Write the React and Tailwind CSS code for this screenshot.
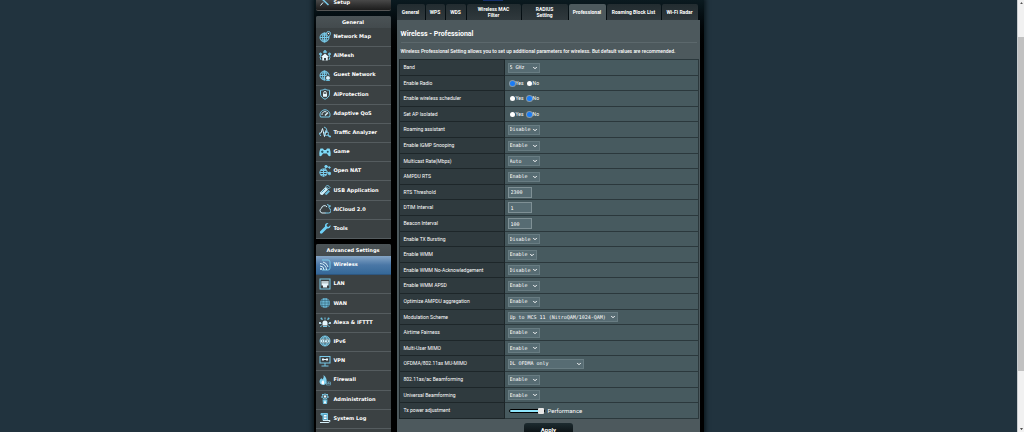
import { useState } from "react";
import { ChevronDown } from "lucide-react";

const generalMenu = [
  { label: "Network Map", icon: "map" },
  { label: "AiMesh", icon: "mesh" },
  { label: "Guest Network", icon: "guest" },
  { label: "AiProtection", icon: "shield" },
  { label: "Adaptive QoS", icon: "gauge" },
  { label: "Traffic Analyzer", icon: "traffic" },
  { label: "Game", icon: "game" },
  { label: "Open NAT", icon: "nat" },
  { label: "USB Application", icon: "usb" },
  { label: "AiCloud 2.0", icon: "cloud" },
  { label: "Tools", icon: "wrench" },
];

const advancedMenu = [
  { label: "Wireless", icon: "wireless" },
  { label: "LAN", icon: "lan" },
  { label: "WAN", icon: "wan" },
  { label: "Alexa & IFTTT", icon: "alexa" },
  { label: "IPv6", icon: "ipv6" },
  { label: "VPN", icon: "vpn" },
  { label: "Firewall", icon: "firewall" },
  { label: "Administration", icon: "admin" },
  { label: "System Log", icon: "log" },
];

const tabs = [
  { label: "General", width: "w-7" },
  { label: "WPS", width: "w-[19px]" },
  { label: "WDS", width: "w-5" },
  { label: "Wireless MAC Filter", width: "w-[54px] px-2" },
  { label: "RADIUS Setting", width: "w-[46px] px-3" },
  { label: "Professional", width: "w-[37px]" },
  { label: "Roaming Block List", width: "w-[54px]" },
  { label: "Wi-Fi Radar", width: "w-9" },
];

const toggle = ["Enable", "Disable"];

const settings = [
  { label: "Band", type: "select", options: ["5 GHz", "2.4 GHz"] },
  { label: "Enable Radio", type: "radio", value: "Yes" },
  { label: "Enable wireless scheduler", type: "radio", value: "No" },
  { label: "Set AP Isolated", type: "radio", value: "No" },
  { label: "Roaming assistant", type: "select", options: ["Disable", "Enable"] },
  { label: "Enable IGMP Snooping", type: "select", options: toggle },
  { label: "Multicast Rate(Mbps)", type: "select", options: ["Auto"] },
  { label: "AMPDU RTS", type: "select", options: toggle },
  { label: "RTS Threshold", type: "text", value: "2300" },
  { label: "DTIM Interval", type: "text", value: "1" },
  { label: "Beacon Interval", type: "text", value: "100" },
  { label: "Enable TX Bursting", type: "select", options: ["Disable", "Enable"] },
  { label: "Enable WMM", type: "select", options: toggle, width: "w-[29px]" },
  { label: "Enable WMM No-Acknowledgement", type: "select", options: ["Disable", "Enable"] },
  { label: "Enable WMM APSD", type: "select", options: toggle },
  { label: "Optimize AMPDU aggregation", type: "select", options: toggle },
  { label: "Modulation Scheme", type: "select", options: ["Up to MCS 11 (NitroQAM/1024-QAM)"], width: "w-[110px]" },
  { label: "Airtime Fairness", type: "select", options: toggle },
  { label: "Multi-User MIMO", type: "select", options: toggle },
  { label: "OFDMA/802.11ax MU-MIMO", type: "select", options: ["DL OFDMA only"], width: "w-[76px]" },
  { label: "802.11ax/ac Beamforming", type: "select", options: toggle },
  { label: "Universal Beamforming", type: "select", options: toggle },
  { label: "Tx power adjustment", type: "range" },
];

const globe = (
  <>
    <circle cx="11" cy="13" r="9" />
    <ellipse cx="11" cy="13" rx="4" ry="9" />
    <path d="M2 13h18M4 8h14M4 18h14M11 4v18" />
  </>
);

const icons = {
  setup: (
    <>
      <path d="M3 5l16 15M3 5l4-1M3 5l-1 4" strokeWidth="3" />
      <path d="M20 4l-6 6M8 15l-5 6" stroke="#dff4fd" />
    </>
  ),
  map: (
    <>
      {globe}
      <path d="M19 12c-2-3-4-4-4-7a4 4 0 0 1 8 0c0 3-2 4-4 7z" fill="#3b4143" />
      <circle cx="19" cy="5" r="1.500" fill="#fff" stroke="none" />
    </>
  ),
  mesh: (
    <>
      <path d="M12 7l-8 7h2.500v7h11v-7H20z" fill="#e6f6fd" stroke="none" />
      <path d="M4 20a10 10 0 0 1 0-11M20 20a10 10 0 0 0 0-11M8 4.500a10 10 0 0 1 8 0" />
      <circle cx="3" cy="8" r="2" fill="#69bedd" />
      <circle cx="21" cy="8" r="2" fill="#69bedd" />
      <circle cx="12" cy="3" r="2" fill="#69bedd" />
      <path d="M10 21v-5h4v5" fill="#3b4143" stroke="none" />
    </>
  ),
  guest: (
    <>
      {globe}
      <circle cx="18" cy="18" r="5" fill="#d8f1fb" stroke="#3b4143" />
      <path d="M14 24c0-4 8-4 8 0z" fill="#69bedd" stroke="none" />
    </>
  ),
  shield: (
    <>
      <path d="M12 2c3 2 6 2.500 9 2.500V12c0 5-4 8-9 10.500C7 20 3 17 3 12V4.500C6 4.500 9 4 12 2z" />
      <path d="M9.500 12V9.500a2.500 2.500 0 0 1 5 0V12" stroke="#e6f6fd" />
      <rect x="8" y="12" width="8" height="5.500" fill="#e6f6fd" stroke="none" />
    </>
  ),
  gauge: (
    <>
      <path d="M3 20a10 10 0 1 1 18 0z" />
      <path d="M6 16a6 6 0 0 1 9-6" stroke="#d8f1fb" />
      <path d="M12 17l6-6" stroke="#d8f1fb" strokeWidth="3" />
    </>
  ),
  traffic: (
    <>
      <path d="M1 14h3l3-9 4 16 3-12 2 5" stroke="#d8f1fb" />
      <path d="M10 2a8 8 0 0 1 6 8M4 20a8 8 0 0 1-3-6" />
      <circle cx="15" cy="15" r="4" />
      <path d="M18 18l3 3h3" strokeWidth="3" />
    </>
  ),
  game: (
    <>
      <path d="M3 5h5l2 3h4l2-3h5c2 4 3 9 2 15-3 1-5-1-7-5H8c-2 4-4 6-7 5C0 14 1 9 3 5z" fill="#7fdaf8" stroke="none" />
      <path d="M6.500 9v5M4 11.500h5" stroke="#24505f" />
      <circle cx="17.500" cy="11.500" r="2" fill="#24505f" stroke="none" />
    </>
  ),
  nat: (
    <>
      <circle cx="9" cy="15" r="7.500" />
      <path d="M2 15h15M9 8v15M4 11h10M4 19h10" />
      <path d="M11 9l4-6 6 2M17 14l5 3" />
      <circle cx="14" cy="3" r="2.500" fill="#7fdaf8" />
      <circle cx="21" cy="5" r="1.500" fill="#7fdaf8" />
      <circle cx="21" cy="17" r="2.500" fill="#7fdaf8" />
    </>
  ),
  usb: (
    <>
      <path d="M2 17L13 6l5 5L7 22c-3 1-6-2-5-5z" fill="#cdeefa" stroke="none" />
      <path d="M14 5l3-3 5 5-3 3z" />
      <path d="M11 20l8-8 3 3-7 7z" fill="#69bedd" stroke="none" />
      <path d="M5 17l7-7" stroke="#4897b5" />
    </>
  ),
  cloud: (
    <>
      <path d="M13 20H6a5 5 0 0 1-1-9.500A6 6 0 0 1 16 8" stroke="#d8f1fb" />
      <path d="M12 20h7a4.500 4.500 0 0 0 1-9" />
      <path d="M16 3a7 7 0 0 1 6 5M22 4v4h-4" />
    </>
  ),
  wrench: (
    <path d="M2 19L12 9c-1-4 2-8 7-7l-4 4 1 3 3 1 4-4c1 5-3 8-7 7L6 23c-3 1-5-1-4-4z" fill="#6fd0f6" stroke="none" />
  ),
  wireless: (
    <>
      <path d="M6 2h12a4 4 0 0 1 4 4v12a4 4 0 0 1-4 4H6" />
      <path d="M2 9a13 13 0 0 1 13 13M2 14a8 8 0 0 1 8 8M8 6a13 13 0 0 1 10 10" stroke="#d8f1fb" />
      <circle cx="4" cy="20" r="2" fill="#d8f1fb" stroke="none" />
    </>
  ),
  lan: (
    <>
      <rect x="2" y="2" width="20" height="20" />
      <path d="M5 6h14v9h-3v4H8v-4H5z" fill="#e6f6fd" stroke="none" />
      <path d="M8 6v5M12 6v5M16 6v5" stroke="#3b4143" strokeWidth="1" />
    </>
  ),
  wan: (
    <>
      <circle cx="12" cy="12" r="10" fill="#6bb6d4" stroke="none" />
      <path d="M12 2v20M2 12h20M4 7h16M4 17h16M7 4c-2 5-2 11 0 16M17 4c2 5 2 11 0 16" stroke="#2d5567" strokeWidth="1" />
    </>
  ),
  alexa: (
    <>
      <path d="M7 19v-5a5 5 0 0 1 10 0v5z" fill="#e6f6fd" stroke="none" />
      <path d="M5 15L1 14M19 15l4-1M7 8L4 4M17 8l3-4M12 7V3M5 19l-2 3M19 19l2 3" />
      <circle cx="2" cy="14" r="2" fill="#d8f1fb" stroke="none" />
      <circle cx="22" cy="14" r="2" fill="#d8f1fb" stroke="none" />
      <circle cx="5" cy="5" r="2" fill="#69bedd" stroke="none" />
      <circle cx="19" cy="5" r="2" fill="#69bedd" stroke="none" />
      <path d="M8 21h8" />
    </>
  ),
  ipv6: (
    <>
      <circle cx="12" cy="12" r="10" />
      <path d="M12 2c-6 5-6 15 0 20M12 2c6 5 6 15 0 20M4 6h16M4 18h16" />
      <rect x="3" y="9" width="18" height="6" fill="#cdeefa" stroke="none" />
      <path d="M7 10v4M11 14v-4h3M16 10l1 4 1-4" stroke="#38616f" strokeWidth="1" />
    </>
  ),
  vpn: (
    <>
      <rect x="2" y="3" width="20" height="13" />
      <path d="M5 22h14M12 16v6" />
      <path d="M6 9h4M14 9h4" stroke="#e6f6fd" strokeWidth="4" />
      <path d="M10 9h4" stroke="#e6f6fd" />
    </>
  ),
  firewall: (
    <>
      <path d="M9 2c5 4 7 8 6 14-1 4-3 6-6 6-5 0-8-3-8-7 0-3 2-5 4-7l1 3c3-2 4-5 3-9z" fill="#7fd0ee" stroke="none" />
      <path d="M8 12c3 3 3 6 1 9-3 0-4-2-4-4s2-3 3-5z" fill="#fff" stroke="none" />
      <path d="M15 16h8v6h-8zM15 19h8M19 16v3" strokeWidth="1" />
    </>
  ),
  admin: (
    <>
      <circle cx="12" cy="7" r="5" />
      <path d="M6 2l2 2M18 2l-2 2M4 8h3M20 8h-3" />
      <circle cx="12" cy="7" r="2.500" fill="#e6f6fd" stroke="none" />
      <path d="M7 13h10l-1 9H8z" fill="#69bedd" stroke="none" />
      <path d="M12 14l-2 5 2 3 2-3z" fill="#fff" stroke="none" />
    </>
  ),
  log: (
    <>
      <path d="M4 3h13v14H8V6H4z" fill="#5aa5c4" />
      <path d="M10 7h5M10 10h5M10 13h5" stroke="#fff" />
      <path d="M2 21h16c3 0 4-2 4-4H8" stroke="#d8f1fb" />
    </>
  ),
};

function MenuIcon({ name }) {
  return (
    <svg
      viewBox="0 0 24 24"
      className="size-3 shrink-0"
      fill="none"
      stroke="#78c9e8"
      strokeWidth="2"
      aria-hidden="true"
    >
      {icons[name]}
    </svg>
  );
}

function Menu({ title, items, active, rows }) {
  return (
    <nav className="overflow-hidden rounded-t-[2px] bg-[#3b4143]">
      <h2 className="flex h-3 items-center justify-center bg-linear-to-b from-[#4b5356] to-[#434a4d] text-[5px] leading-none font-bold text-white">
        {title}
      </h2>
      <ul className={`grid auto-rows-fr ${rows}`}>
        {items.map((item) => (
          <li key={item.label} className="flex">
            <a
              href="#"
              className={`flex w-full items-center gap-[3px] border-b pb-px pl-[3px] text-[5px] leading-none font-bold text-white ${
                item.label === active
                  ? "border-[#2e567f] bg-linear-to-b from-[#86a6c6] via-[#4a77a6] via-50% to-[#356898]"
                  : "border-[#555c5f]"
              }`}
            >
              <MenuIcon name={item.icon} />
              {item.label}
            </a>
          </li>
        ))}
      </ul>
    </nav>
  );
}

function SelectField({ id, options, width = "w-8" }) {
  return (
    <div className={`relative ${width}`}>
      <select
        id={id}
        className="block h-[10px] w-full appearance-none border border-[#687c82] bg-[#576c73] pl-px font-['DejaVu_Sans_Mono',monospace] text-[5px] leading-none text-white"
      >
        {options.map((o) => (
          <option key={o}>{o}</option>
        ))}
      </select>
      <ChevronDown strokeWidth={4} className="pointer-events-none absolute top-[2px] right-[2px] size-[6px] text-white" />
    </div>
  );
}

function RadioField({ id, label, value }) {
  const [checked, setChecked] = useState(value);
  return (
    <div role="radiogroup" aria-label={label} className="flex gap-[3px] pl-[2px]">
      {["Yes", "No"].map((v) => (
        <label key={v} className="flex items-center gap-px text-[5px] leading-none">
          <input
            type="radio"
            name={id}
            checked={checked === v}
            onChange={() => setChecked(v)}
            className="size-[5px] appearance-none rounded-full bg-white checked:bg-[#1a7cf5] checked:shadow-[0_0_0_1px_#c4dcf780]"
          />
          {v}
        </label>
      ))}
    </div>
  );
}

function Field({ item, id }) {
  if (item.type === "select") return <SelectField id={id} options={item.options} width={item.width} />;
  if (item.type === "radio") return <RadioField id={id} label={item.label} value={item.value} />;
  if (item.type === "text") {
    return (
      <input
        id={id}
        type="text"
        defaultValue={item.value}
        className="block h-[11px] w-6 border border-[#7f9095] bg-[#576c73] pl-[2px] font-['DejaVu_Sans_Mono',monospace] text-[5px] leading-none text-white"
      />
    );
  }
  return (
    <div className="flex items-center gap-[3px] pl-px text-[6px] leading-none">
      <input
        id={id}
        type="range"
        defaultValue="100"
        className="h-[6px] w-9 appearance-none bg-transparent [&::-webkit-slider-runnable-track]:h-1 [&::-webkit-slider-runnable-track]:rounded-full [&::-webkit-slider-runnable-track]:border [&::-webkit-slider-runnable-track]:border-black [&::-webkit-slider-runnable-track]:bg-[#8fe6fb] [&::-webkit-slider-thumb]:-mt-[2px] [&::-webkit-slider-thumb]:size-[6px] [&::-webkit-slider-thumb]:appearance-none [&::-webkit-slider-thumb]:rounded-[1px] [&::-webkit-slider-thumb]:bg-[#e6e6e6]"
      />
      <span>Performance</span>
    </div>
  );
}

function Scrollbar() {
  return (
    <div className="flex w-[7px] shrink-0 flex-col items-center border-l border-[#c9ced1] bg-[#f1f1f1] py-[2px]">
      <svg viewBox="0 0 4 3" className="w-[3px]" fill="#505050"><path d="M0 3l2-3 2 3z" /></svg>
      <div className="mt-[33px] h-[78%] w-full shrink-0 bg-[#c1c1c1]" />
      <svg viewBox="0 0 4 3" className="mt-auto w-[3px]" fill="#505050"><path d="M0 0l2 3 2-3z" /></svg>
    </div>
  );
}

export default function App() {
  return (
    <div className="flex h-screen overflow-hidden bg-[#21333e]">
      <div className="min-w-0 flex-1">
        <div className="mx-auto flex h-full w-full max-w-[390px] items-start gap-[6px] bg-black bg-linear-to-b from-[#0b1a20] to-black to-[60px] pr-1 pl-[2px] shadow-[0_0_4px_2px_#0d191f]">
          <aside className="flex w-[75px] shrink-0 flex-col gap-[5px] font-['DejaVu_Sans',Verdana,sans-serif]">
            <a
              href="#"
              className="flex h-[11px] gap-[3px] rounded-b-[2px] border-b border-[#555] bg-linear-to-b from-[#494949] to-[#1c1c1c] pl-[3px] text-[5px] leading-[5px] font-bold text-white"
            >
              <span className="-mt-[5px]">
                <MenuIcon name="setup" />
              </span>
              Setup
            </a>
            <Menu title="General" items={generalMenu} rows="h-[211px]" />
            <Menu title="Advanced Settings" items={advancedMenu} active="Wireless" rows="mb-5 h-[173px]" />
          </aside>

          <main className="min-w-0 flex-1 font-[Roboto,'Liberation_Sans',sans-serif] text-white">
            <div className="ml-[86px] h-px w-5 bg-[#17306b]" />
            <div className="mt-[3px] flex gap-px" role="tablist">
              {tabs.map((tab) => (
                <button
                  key={tab.label}
                  type="button"
                  role="tab"
                  aria-selected={tab.label === "Professional"}
                  className={`flex h-4 shrink-0 items-center justify-center rounded-t-[2px] text-center text-[5px] leading-[6px] font-bold ${tab.width} ${
                    tab.label === "Professional" ? "bg-[#4d595d]" : "bg-linear-to-b from-[#222c30] to-[#30393d]"
                  }`}
                >
                  {tab.label}
                </button>
              ))}
            </div>

            <section className="bg-[#4d595d] pt-[10px] pr-px pb-10 pl-[2px]">
              <h1 className="mx-[2px] border-b border-[#5c686c] pb-[3px] text-[7px] leading-[9px] font-bold">
                Wireless - Professional
              </h1>
              <p className="mx-[2px] mt-1 mb-1 text-[5px] leading-[8px] font-medium">
                Wireless Professional Setting allows you to set up additional parameters for wireless. But default
                values are recommended.
              </p>
              <table className="w-full border-collapse text-[5px] leading-none">
                <tbody>
                  {settings.map((item, i) => (
                    <tr key={item.label} className="h-4 nth-[5n+2]:h-[15px] nth-[5n+4]:h-[15px]">
                      <th className="w-[105px] border border-[#1d2629] bg-[#2f3a3e] p-0 pl-1 text-left font-normal">
                        <label htmlFor={item.type === "radio" ? undefined : `field-${i}`}>{item.label}</label>
                      </th>
                      <td className="border border-[#2b383c] bg-[#475a5f] p-0 pl-[3px]">
                        <Field item={item} id={`field-${i}`} />
                      </td>
                    </tr>
                  ))}
                </tbody>
              </table>
              <button
                type="button"
                className="mx-auto mt-1 block h-[14px] w-[49px] rounded-[3px] bg-linear-to-b from-[#1d2b30] to-[#060a0c] text-[6px] leading-none font-bold"
              >
                Apply
              </button>
            </section>
          </main>
        </div>
      </div>
      <Scrollbar />
    </div>
  );
}
